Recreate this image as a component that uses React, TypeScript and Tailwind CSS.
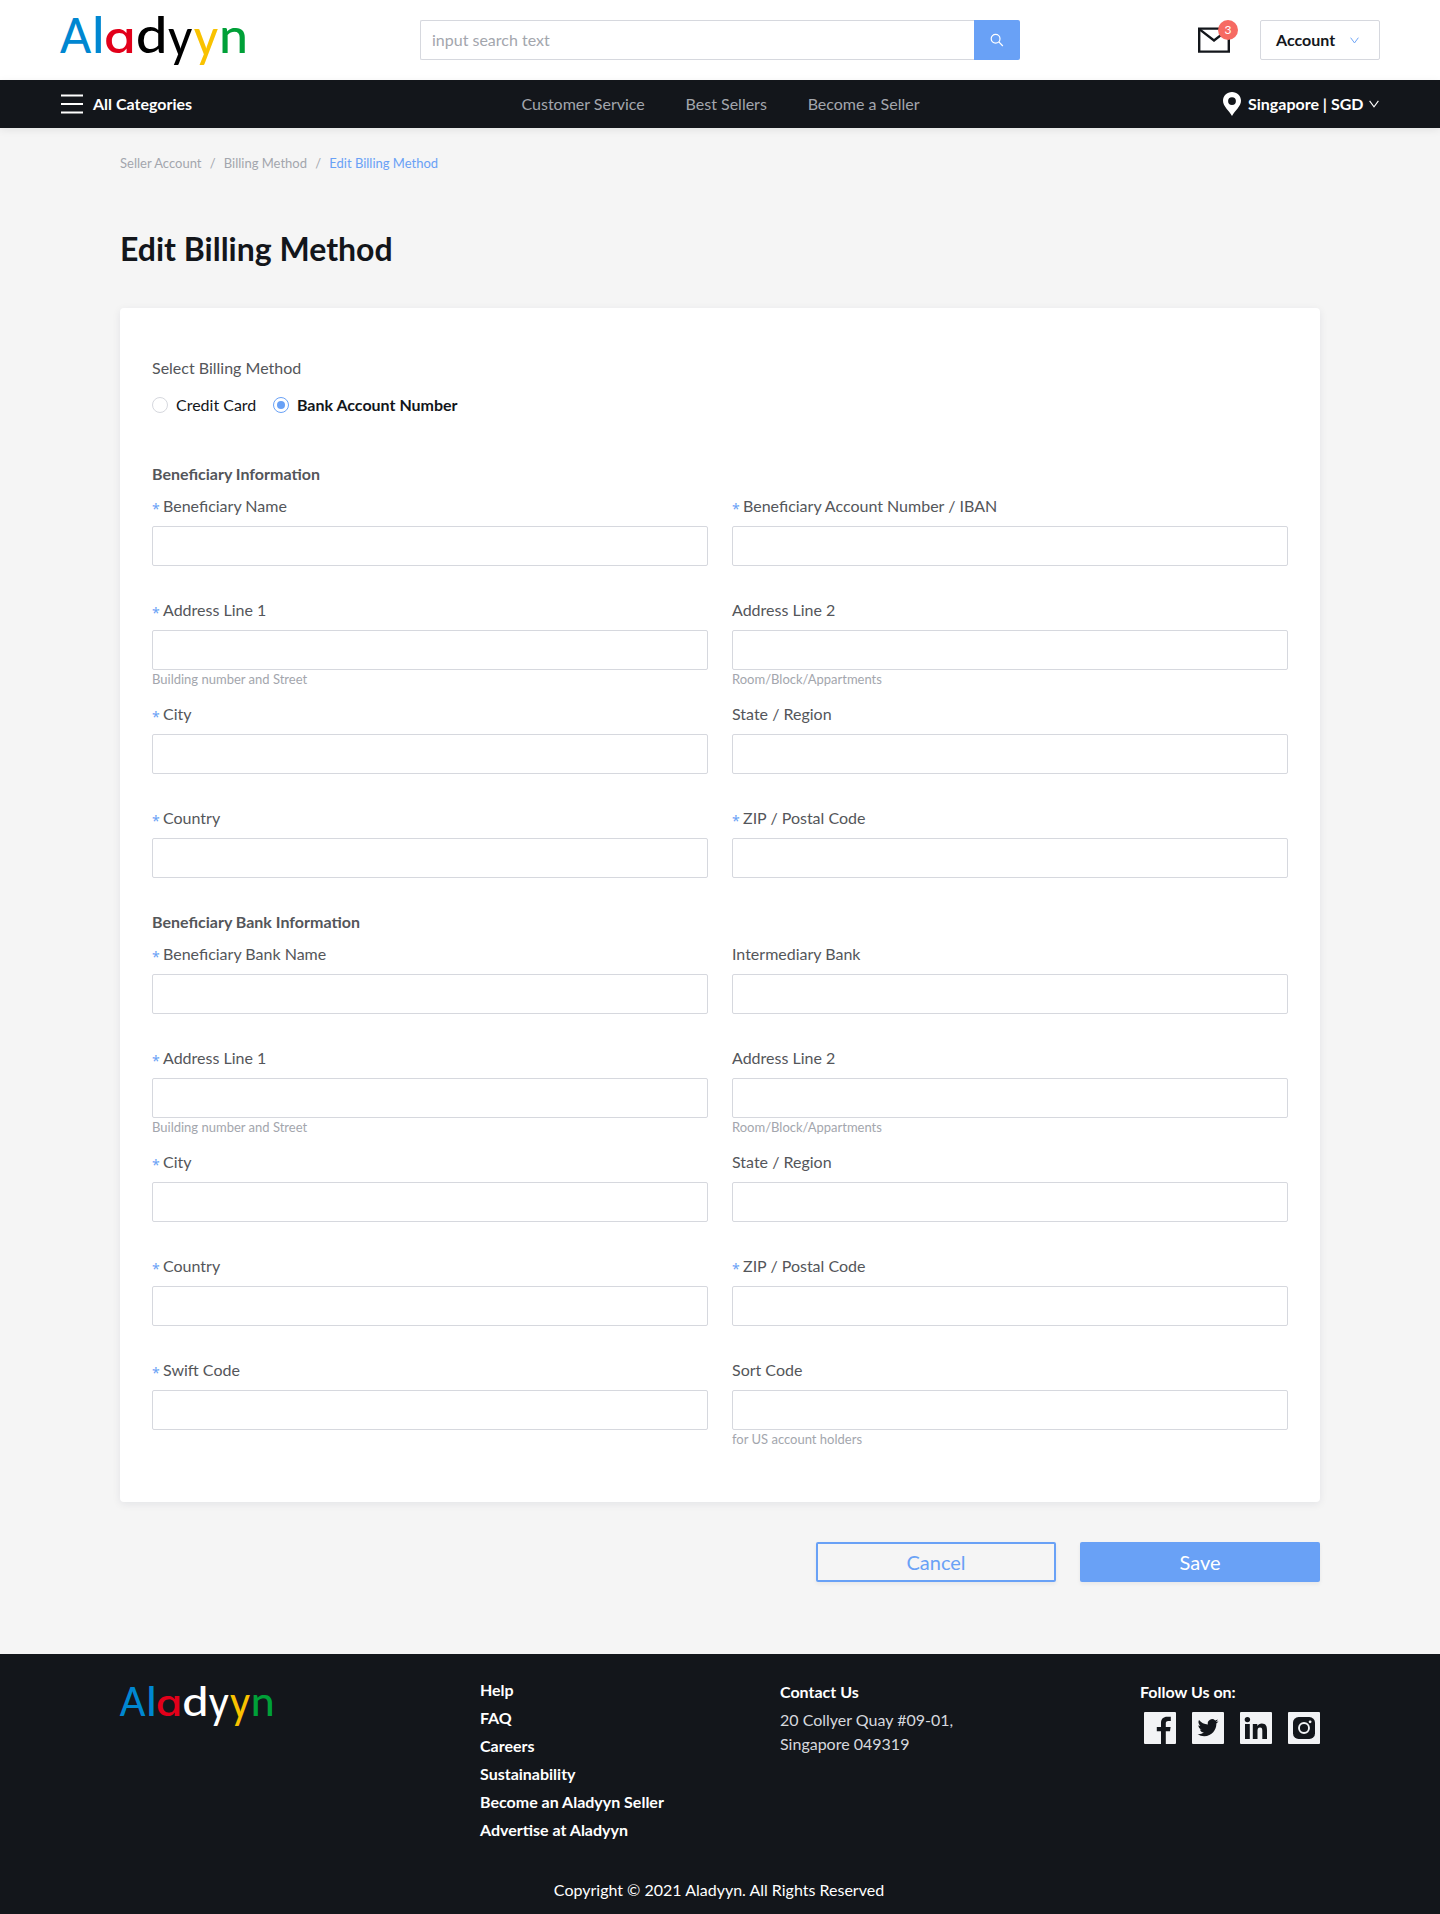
import React from "react";

const BLUE = "#0087d1";

type Glyph = { ch: string; x: number; y?: number; sx: number; sy: number; fill: string; alt?: boolean };

function Logo({ className, dark }: { className: string; dark?: boolean }) {
  const ink = dark ? "#ffffff" : "#000000";
  const glyphs: Glyph[] = [
    { ch: "A", x: 1, sx: 0.952, sy: 1.01, fill: BLUE },
    { ch: "l", x: 33.1, sx: 1.1, sy: 1.03, fill: BLUE },
    { ch: "a", x: 44.75, sx: 1.18, sy: 1.01, fill: "#e2001a", alt: true },
    { ch: "d", x: 76.8, sx: 1.18, sy: 1.03, fill: ink },
    { ch: "y", x: 109, y: 2.5, sx: 0.975, sy: 1.1, fill: ink },
    { ch: "y", x: 134.8, y: 2.5, sx: 0.975, sy: 1.1, fill: "#f9c200" },
    { ch: "n", x: 160.1, sx: 1.08, sy: 1.01, fill: "#00a038" },
  ];
  return (
    <svg viewBox="0 0 190 68" className={className} aria-label="Aladyyn">
      {glyphs.map((g, i) => (
        <text
          key={i}
          transform={`translate(${g.x} ${50 + (g.y ?? 0)}) scale(${g.sx} ${g.sy})`}
          fill={g.fill}
          className={
            g.alt
              ? "font-['Inter'] text-[44px] font-medium [font-feature-settings:'cv11']"
              : "font-['Lato'] text-[48px] font-medium"
          }
        >
          {g.ch}
        </text>
      ))}
    </svg>
  );
}

function Chevron({ className }: { className: string }) {
  return (
    <svg viewBox="0 0 10 8" className={className} fill="none" stroke="currentColor" strokeWidth="1.1">
      <path d="M0.6 0.8 L5 6.8 L9.4 0.8" />
    </svg>
  );
}

function Field({ label, required, help }: { label: string; required?: boolean; help?: string }) {
  return (
    <div className="h-[104px]">
      <label className="flex h-6 items-start leading-6 text-[#54565a]">
        {required && (
          <span className="mr-1 w-[7px] font-['Noto_Sans'] text-sm leading-[29px] text-[#69a1f6]">*</span>
        )}
        {label}
      </label>
      <input className="mt-2 block h-10 w-full rounded-xs border border-[#d6d8de] bg-white outline-none" />
      {help && <div className="text-[13px] leading-[18px] text-[#a3a6ad]">{help}</div>}
    </div>
  );
}

type FieldSpec = { label: string; required?: boolean; help?: string };

const address: FieldSpec[] = [
  { label: "Address Line 1", required: true, help: "Building number and Street" },
  { label: "Address Line 2", help: "Room/Block/Appartments" },
  { label: "City", required: true },
  { label: "State / Region" },
  { label: "Country", required: true },
  { label: "ZIP / Postal Code", required: true },
];

const beneficiary: FieldSpec[] = [
  { label: "Beneficiary Name", required: true },
  { label: "Beneficiary Account Number / IBAN", required: true },
  ...address,
];

const bank: FieldSpec[] = [
  { label: "Beneficiary Bank Name", required: true },
  { label: "Intermediary Bank" },
  ...address,
  { label: "Swift Code", required: true },
  { label: "Sort Code", help: "for US account holders" },
];

function Section({ title, fields }: { title: string; fields: FieldSpec[] }) {
  return (
    <section>
      <h2 className="mb-2 font-bold leading-6 text-[#54565a]">{title}</h2>
      <div className="grid grid-cols-2 gap-x-6">
        {fields.map((f, i) => (
          <Field key={i} {...f} />
        ))}
      </div>
    </section>
  );
}

function Social({ children }: { children: React.ReactNode }) {
  return (
    <svg viewBox="0 0 32 32" className="size-8">
      <rect width="32" height="32" rx="1" fill="#f2f3f5" />
      {children}
    </svg>
  );
}

export default function App() {
  return (
    <div className="flex h-[1914px] w-[1440px] flex-col bg-[#f5f5f5] font-['Lato',sans-serif] text-base text-[#13161b]">
      <header className="flex h-20 shrink-0 items-center bg-white pr-[60px] pl-[59px]">
        <Logo className="-mt-[7px] h-[68px] w-[190px]" />
        <div className="ml-[171px] flex h-10 w-[600px]">
          <div className="flex-1 rounded-l-xs border border-r-0 border-[#d6d8de] pl-[11px] leading-[38px] text-[#a3a6ad]">
            input search text
          </div>
          <button className="flex w-[46px] items-center justify-center rounded-r-xs bg-[#69a1f6]">
            <svg viewBox="0 0 14 14" className="size-3.5" fill="none" stroke="#fff" strokeWidth="1.2">
              <circle cx="5.6" cy="5.7" r="4.4" />
              <path d="M8.8 8.9 L12.8 13" />
            </svg>
          </button>
        </div>
        <div className="relative ml-[178px] h-[26px] w-8">
          <svg viewBox="0 0 32 26" className="h-[26px] w-8" fill="none" stroke="#13161b" strokeWidth="2.4">
            <path d="M1.2 1.6 H30.8 V24.6 H1.2 Z" />
            <path d="M1.6 2.4 L16 13.4 L30.4 2.4" />
          </svg>
          <span className="absolute -top-[7px] left-5 size-5 rounded-full bg-[#f66a62] text-center text-xs leading-5 text-white">
            3
          </span>
        </div>
        <button className="ml-[30px] flex h-10 w-[120px] items-center rounded-xs border border-[#d6d8de] pl-[15px] font-bold">
          Account
          <Chevron className="ml-[14.5px] h-[7px] w-[9px] text-[#69a1f6]" />
        </button>
      </header>

      <nav className="flex h-12 shrink-0 items-center bg-[#13161b] pl-[61px] text-white shadow-[0_2px_8px_rgba(19,22,27,0.08)]">
        <svg viewBox="0 0 22 20" className="h-5 w-[22px]" stroke="#fff" strokeWidth="2">
          <path d="M0 1.5 H22 M0 10 H22 M0 18.5 H22" />
        </svg>
        <span className="ml-[10px] w-[428.5px] font-bold">All Categories</span>
        <div className="flex w-[701.5px] gap-[40.8px] text-[#a3a6ad]">
          <span>Customer Service</span>
          <span>Best Sellers</span>
          <span>Become a Seller</span>
        </div>
        <svg viewBox="0 0 18 24" className="h-6 w-[18px]" fill="#fff">
          <path
            fillRule="evenodd"
            d="M9 0 C4 0 0 3.9 0 8.8 C0 14.5 6 18.5 9 24 C12 18.5 18 14.5 18 8.8 C18 3.9 14 0 9 0 Z M9 5.2 A3.9 3.9 0 1 1 9 13 A3.9 3.9 0 1 1 9 5.2 Z"
          />
        </svg>
        <span className="ml-[7px] font-bold">Singapore | SGD</span>
        <Chevron className="ml-[5.5px] h-2 w-[10px]" />
      </nav>

      <main className="px-[120px]">
        <div className="mt-6 flex h-[22px] items-center gap-[8.2px] text-[13px] leading-[22px] text-[#a3a6ad]">
          <span>Seller Account</span>
          <span>/</span>
          <span>Billing Method</span>
          <span>/</span>
          <span className="text-[#69a1f6]">Edit Billing Method</span>
        </div>
        <h1 className="mt-[55px] text-[32px] leading-10 font-bold">Edit Billing Method</h1>
        <div className="mt-[39px] h-[1194px] rounded bg-white px-8 pt-12 shadow-[0_2px_8px_rgba(19,22,60,0.08)]">
          <div className="leading-6 text-[#54565a]">Select Billing Method</div>
          <div className="mt-[13px] mb-[45px] flex h-6 items-center">
            <span className="size-4 rounded-full border border-[#d6d8de]" />
            <span className="ml-2">Credit Card</span>
            <span className="ml-[16.6px] flex size-4 items-center justify-center rounded-full border border-[#69a1f6]">
              <span className="size-2 rounded-full bg-[#69a1f6]" />
            </span>
            <span className="ml-2 font-bold">Bank Account Number</span>
          </div>
          <Section title="Beneficiary Information" fields={beneficiary} />
          <Section title="Beneficiary Bank Information" fields={bank} />
        </div>
        <div className="mt-10 flex justify-end gap-6 text-xl">
          <button className="h-10 w-60 rounded-xs border-2 border-[#69a1f6] text-[#69a1f6] shadow-[0_2px_4px_rgba(19,22,27,0.06)]">
            Cancel
          </button>
          <button className="h-10 w-60 rounded-xs bg-[#69a1f6] text-white shadow-[0_2px_4px_rgba(19,22,27,0.06)]">
            Save
          </button>
        </div>
      </main>

      <footer className="mt-auto flex h-[260px] shrink-0 flex-col bg-[#13161b] px-[120px] pt-[22px] text-white">
        <div className="flex h-[202px]">
          <Logo dark className="-mt-[1px] -ml-[1px] h-[56px] w-[156.5px]" />
          <ul className="ml-[204.5px] w-[300px] font-bold leading-7">
            {["Help", "FAQ", "Careers", "Sustainability", "Become an Aladyyn Seller", "Advertise at Aladyyn"].map((t) => (
              <li key={t}>{t}</li>
            ))}
          </ul>
          <div className="w-[360px] pt-1">
            <div className="leading-6 font-bold">Contact Us</div>
            <div className="mt-1 leading-6 text-[#d6d8de]">
              20 Collyer Quay #09-01,
              <br />
              Singapore 049319
            </div>
          </div>
          <div className="pt-1">
            <div className="leading-6 font-bold">Follow Us on:</div>
            <div className="mt-2 ml-1 flex gap-4">
              <Social>
                <path
                  fill="#13161b"
                  d="M17 32 V19.2 H12.8 V15 H17 V11 C17 7 19.4 4.8 23.2 4.8 H26.8 V9 H24.2 C22.3 9 21.8 9.9 21.8 11.5 V15 H26.6 L26 19.2 H21.8 V32 Z"
                />
              </Social>
              <Social>
                <g transform="translate(5.6 5.2) scale(0.87)">
                  <path
                    fill="#13161b"
                    d="M23.953 4.57a10 10 0 01-2.825.775 4.958 4.958 0 002.163-2.723c-.951.555-2.005.959-3.127 1.184a4.92 4.92 0 00-8.384 4.482C7.69 8.095 4.067 6.13 1.64 3.162a4.822 4.822 0 00-.666 2.475c0 1.71.87 3.213 2.188 4.096a4.904 4.904 0 01-2.228-.616v.06a4.923 4.923 0 003.946 4.827 4.996 4.996 0 01-2.212.085 4.936 4.936 0 004.604 3.417 9.867 9.867 0 01-6.102 2.105c-.39 0-.779-.023-1.17-.067a13.995 13.995 0 007.557 2.209c9.053 0 13.998-7.496 13.998-13.985 0-.21 0-.42-.015-.63A9.935 9.935 0 0024 4.59z"
                  />
                </g>
              </Social>
              <Social>
                <g fill="#13161b">
                  <circle cx="7.4" cy="7.6" r="2.7" />
                  <path d="M5 12 H9.8 V27 H5 Z M12.8 12 H17.3 V14 C18.2 12.6 19.8 11.6 21.8 11.6 C26 11.6 27 14.4 27 18.2 V27 H22.3 V19.2 C22.3 17.2 22.2 15.6 20 15.6 C17.9 15.6 17.5 17.2 17.5 19.1 V27 H12.8 Z" />
                </g>
              </Social>
              <Social>
                <rect x="5" y="5" width="22" height="22" rx="5.6" fill="#13161b" />
                <circle cx="16" cy="16" r="5" fill="none" stroke="#f2f3f5" strokeWidth="1.9" />
                <circle cx="22.1" cy="9.8" r="1.4" fill="#f2f3f5" />
              </Social>
            </div>
          </div>
        </div>
        <div className="-ml-0.5 text-center leading-6">Copyright © 2021 Aladyyn. All Rights Reserved</div>
      </footer>
    </div>
  );
}
